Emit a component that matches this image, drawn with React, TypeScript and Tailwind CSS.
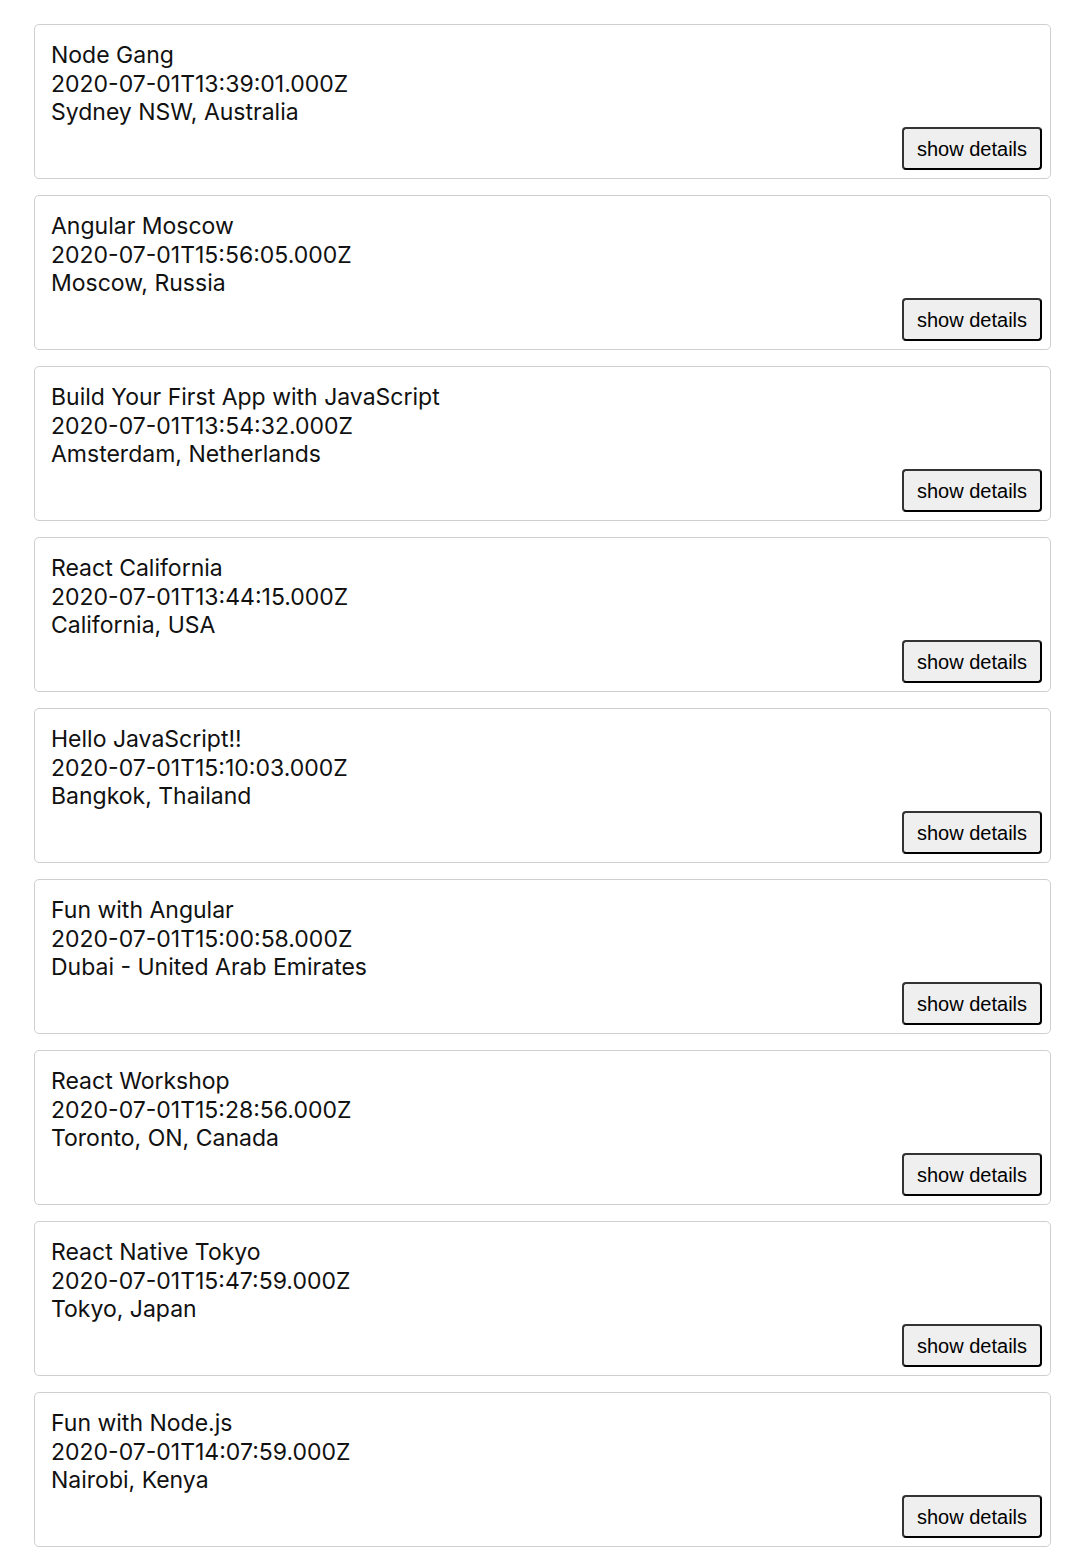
import React from "react";

const events = [
  ["Node Gang", "2020-07-01T13:39:01.000Z", "Sydney NSW, Australia"],
  ["Angular Moscow", "2020-07-01T15:56:05.000Z", "Moscow, Russia"],
  ["Build Your First App with JavaScript", "2020-07-01T13:54:32.000Z", "Amsterdam, Netherlands"],
  ["React California", "2020-07-01T13:44:15.000Z", "California, USA"],
  ["Hello JavaScript!!", "2020-07-01T15:10:03.000Z", "Bangkok, Thailand"],
  ["Fun with Angular", "2020-07-01T15:00:58.000Z", "Dubai - United Arab Emirates"],
  ["React Workshop", "2020-07-01T15:28:56.000Z", "Toronto, ON, Canada"],
  ["React Native Tokyo", "2020-07-01T15:47:59.000Z", "Tokyo, Japan"],
  ["Fun with Node.js", "2020-07-01T14:07:59.000Z", "Nairobi, Kenya"],
];

export default function App() {
  return (
    <div className="min-h-[1558px] bg-white pl-[34px] pr-[27px] pt-[24px] flex flex-col gap-[16px] text-black">
      {events.map(([name, date, loc]) => (
        <div
          key={name}
          className="h-[155px] border border-[#cfcfcf] rounded-[5px] pl-4 pr-2 pt-[16px] pb-2 flex flex-col"
        >
          <div
            className="text-[23px] leading-[28.6px] text-[#111]"
            style={{ fontFamily: 'Inter, "Liberation Sans", sans-serif' }}
          >
            <div>{name}</div>
            <div>{date}</div>
            <div>{loc}</div>
          </div>
          <div className="flex justify-end mt-auto">
            <button
              className="w-[140px] h-[43px] bg-[#efefef] border-2 border-t-[#333] border-l-[#333] border-b-black border-r-black rounded-[4px] text-[20px] text-black"
              style={{ fontFamily: '"Liberation Sans", Arial, sans-serif' }}
            >
              show details
            </button>
          </div>
        </div>
      ))}
    </div>
  );
}
